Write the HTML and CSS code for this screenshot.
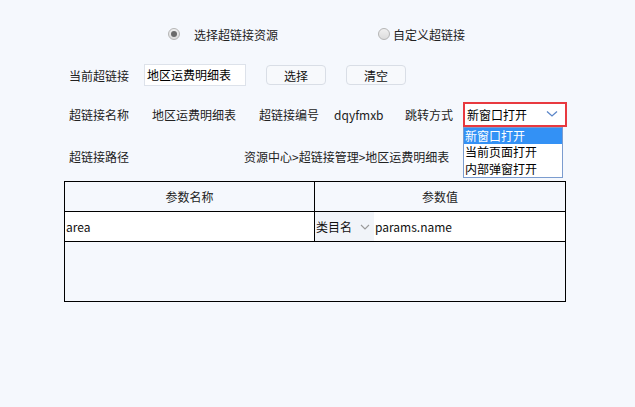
FILE: index.html
```html
<!DOCTYPE html>
<html lang="zh-CN">
<head>
    <meta charset="UTF-8">
    <title>超链接设置</title>
    <link rel="stylesheet" href="styles.css">
</head>
<body>
    <div class="panel">
        <div class="radio-row">
            <label class="radio-item first"><span class="radio checked"></span>选择超链接资源</label>
            <label class="radio-item second"><span class="radio"></span>自定义超链接</label>
        </div>

        <div class="row current-row">
            <span class="label w75">当前超链接</span>
            <div class="text-input">地区运费明细表</div>
            <button class="btn btn-select">选择</button>
            <button class="btn btn-clear">清空</button>
        </div>

        <div class="row info-row">
            <span class="label w83">超链接名称</span>
            <span class="label w107">地区运费明细表</span>
            <span class="label w75">超链接编号</span>
            <span class="label w71">dqyfmxb</span>
            <span class="label w58">跳转方式</span>
            <div class="select-wrap">
                <div class="select-box">
                    <span>新窗口打开</span>
                    <svg class="chevron" width="12" height="8" viewBox="0 0 12 8"><path d="M1 1.5 L6 6 L11 1.5" fill="none" stroke="#5b86c8" stroke-width="1.3"/></svg>
                </div>
                <ul class="dropdown">
                    <li class="active">新窗口打开</li>
                    <li>当前页面打开</li>
                    <li>内部弹窗打开</li>
                </ul>
            </div>
        </div>

        <div class="row path-row">
            <span class="label w175">超链接路径</span>
            <span class="label">资源中心&gt;超链接管理&gt;地区运费明细表</span>
        </div>

        <table class="params">
            <thead>
                <tr>
                    <th class="col-name">参数名称</th>
                    <th>参数值</th>
                </tr>
            </thead>
            <tbody>
                <tr class="data-row">
                    <td>area</td>
                    <td class="value-cell">
                        <span class="mini-select">类目名<svg width="10" height="6" viewBox="0 0 10 6"><path d="M1 1 L5 5 L9 1" fill="none" stroke="#999" stroke-width="1.1"/></svg></span><span>params.name</span>
                    </td>
                </tr>
                <tr class="empty-row">
                    <td colspan="2"></td>
                </tr>
            </tbody>
        </table>
    </div>
</body>
</html>
```

FILE: styles.css
```css
body {
    margin: 0;
    background-color: #f5f8fd;
    font-family: "Noto Sans CJK SC", "Noto Sans", sans-serif;
    font-size: 12px;
    color: #222;
    width: 635px;
    height: 407px;
}
.panel {
    padding-left: 64px;
    width: 502px;
}
.radio-row {
    display: flex;
    align-items: center;
    height: 18px;
    padding-top: 25px;
}
.radio-item {
    display: flex;
    align-items: center;
}
.radio-item.first {
    margin-left: 104px;
    width: 210px;
}
.radio {
    width: 10px;
    height: 10px;
    border: 1px solid #b5b5b5;
    border-radius: 50%;
    background: linear-gradient(#f0f0f0, #dcdcdc);
    margin-right: 14px;
    position: relative;
}
.radio-item.second .radio {
    margin-right: 3px;
}
.radio.checked::after {
    content: "";
    position: absolute;
    left: 2px;
    top: 2px;
    width: 6px;
    height: 6px;
    border-radius: 50%;
    background: #6b6b6b;
}
.row {
    display: flex;
    align-items: center;
}
.label {
    flex-shrink: 0;
    white-space: nowrap;
}
.w58 { width: 58px; }
.w71 { width: 71px; }
.w75 { width: 75px; }
.w83 { width: 83px; }
.w107 { width: 107px; }
.w175 { width: 175px; }
.current-row {
    margin-top: 21px;
    padding-left: 5px;
    height: 22px;
}
.text-input {
    width: 98px;
    height: 20px;
    line-height: 20px;
    padding-left: 2px;
    border: 1px solid #dde2ea;
    background: #fff;
    font-size: 12px;
    color: #000;
}
.btn {
    width: 60px;
    height: 20px;
    border: 1px solid #d9dee6;
    border-radius: 4px;
    background: #f7f9fc;
    font-family: inherit;
    font-size: 12px;
    color: #111;
    padding: 0;
}
.btn-select {
    margin-left: 20px;
}
.btn-clear {
    margin-left: 20px;
}
.info-row {
    margin-top: 15px;
    padding-left: 5px;
    height: 26px;
}
.select-wrap {
    position: relative;
}
.select-box {
    width: 98px;
    height: 21px;
    border: 2px solid #e8393f;
    background: #fff;
    display: flex;
    align-items: center;
    justify-content: space-between;
    padding-left: 2px;
    box-sizing: content-box;
    font-size: 12px;
    color: #000;
}
.chevron {
    margin-right: 7px;
}
.dropdown {
    position: absolute;
    left: 0;
    top: 25px;
    width: 98px;
    margin: 0;
    padding: 0;
    list-style: none;
    border: 1px solid #7b9ccf;
    background: #fff;
    font-size: 12px;
    color: #000;
}
.dropdown li {
    height: 16.6px;
    line-height: 16px;
    padding-left: 1px;
    white-space: nowrap;
}
.dropdown li.active {
    background: #3391f5;
    color: #fff;
}
.path-row {
    margin-top: 20px;
    padding-left: 5px;
    height: 18px;
}
.params {
    margin-top: 16px;
    width: 502px;
    border-collapse: collapse;
    font-size: 12px;
}
.params th,
.params td {
    border: 1px solid #000;
    padding: 0;
}
.params th {
    height: 29px;
    font-weight: normal;
    color: #222;
}
.col-name {
    width: 249px;
}
.data-row td {
    height: 29px;
    background: #fff;
    font-size: 12px;
    color: #111;
    padding-left: 1px;
}
.data-row td.value-cell {
    padding-left: 0;
}
.mini-select {
    display: inline-flex;
    align-items: center;
    gap: 8px;
    width: 58px;
    height: 29px;
    padding-left: 1px;
    background: #f1f4f9;
    vertical-align: middle;
    margin-right: 1px;
}
.value-cell span {
    vertical-align: middle;
}
.empty-row td {
    height: 59px;
}
```
